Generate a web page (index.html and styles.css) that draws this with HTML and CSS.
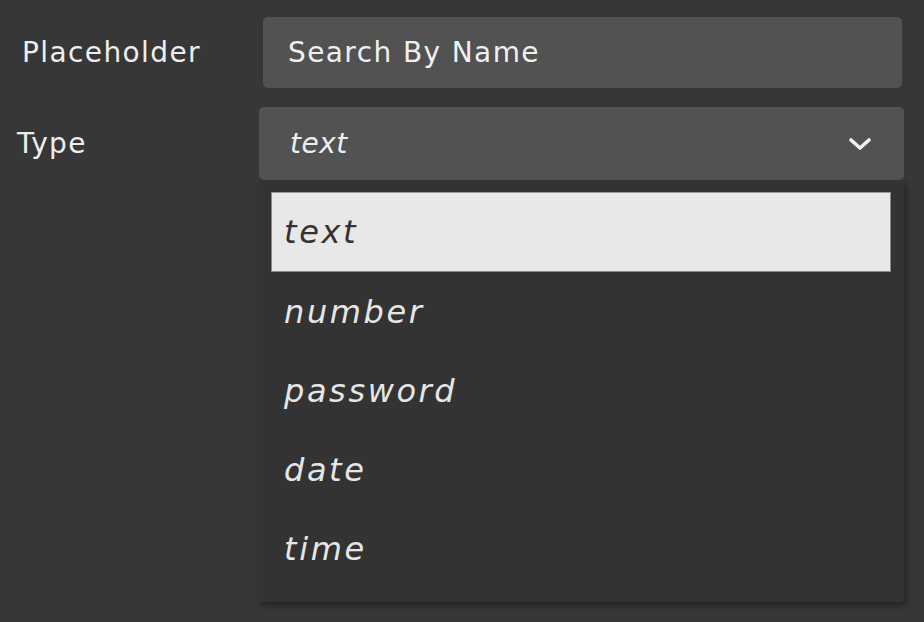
FILE: index.html
```html
<!DOCTYPE html>
<html lang="en">
<head>
<meta charset="utf-8">
<title>Input settings</title>
<link rel="stylesheet" href="styles.css">
</head>
<body>
<div class="form">
  <div class="row row-placeholder">
    <div class="label">Placeholder</div>
    <div class="input">Search By Name</div>
  </div>
  <div class="row row-type">
    <div class="label">Type</div>
    <div class="select-wrap">
      <div class="select">
        <span class="value">text</span>
        <svg class="chevron" width="24" height="14" viewBox="0 0 24 14"><path d="M3 3 L12 11 L21 3" fill="none" stroke="#f2f2f2" stroke-width="3.6" stroke-linecap="round" stroke-linejoin="round"/></svg>
      </div>
      <ul class="menu">
        <li class="item active">text</li>
        <li class="item">number</li>
        <li class="item">password</li>
        <li class="item">date</li>
        <li class="item">time</li>
      </ul>
    </div>
  </div>
</div>
</body>
</html>
```
FILE: styles.css
```css
html, body {
  margin: 0;
  padding: 0;
  background: #373737;
  width: 924px;
  height: 622px;
  overflow: hidden;
  font-family: "DejaVu Sans", sans-serif;
  color: #ededed;
}
.form {
  display: flex;
  flex-direction: column;
}
.row {
  display: flex;
  align-items: center;
}
.row-placeholder {
  padding-top: 17px;
  padding-left: 22px;
}
.row-type {
  margin-top: 19px;
  padding-left: 17px;
}
.label {
  font-size: 28px;
  letter-spacing: 1.4px;
  color: #eeeeee;
}
.row-placeholder .label { width: 241px; }
.row-type .label { width: 242px; }
.input {
  width: 614px;
  height: 71px;
  padding-left: 25px;
  background: #525252;
  border-radius: 5px;
  display: flex;
  align-items: center;
  font-size: 28px;
  letter-spacing: 1.4px;
  color: #f0f0f0;
}
.select-wrap {
  position: relative;
  width: 645px;
}
.select {
  height: 73px;
  background: #525252;
  border-radius: 5px;
  display: flex;
  align-items: center;
  justify-content: space-between;
  padding-left: 31px;
  padding-right: 32px;
}
.value {
  font-style: italic;
  font-size: 28px;
  letter-spacing: 0.5px;
  color: #eeeeee;
}
.chevron { display: block; }
.menu {
  position: absolute;
  top: 73px;
  left: 0;
  width: 645px;
  height: 422px;
  box-sizing: border-box;
  margin: 0;
  padding: 12px 13px 0 12px;
  list-style: none;
  background: #333333;
  box-shadow: 2px 4px 6px rgba(0, 0, 0, 0.35);
  border-radius: 0 0 4px 4px;
}
.item {
  height: 79px;
  box-sizing: border-box;
  padding-left: 13px;
  display: flex;
  align-items: center;
  font-style: italic;
  font-size: 32px;
  letter-spacing: 2.6px;
  color: #e6e6e6;
}
.item.active {
  height: 80px;
  background: #e8e8e8;
  color: #333333;
  border: 1px solid #8a8a8a;
  border-top-color: #9a9a9a;
  padding-left: 12px;
}
```
